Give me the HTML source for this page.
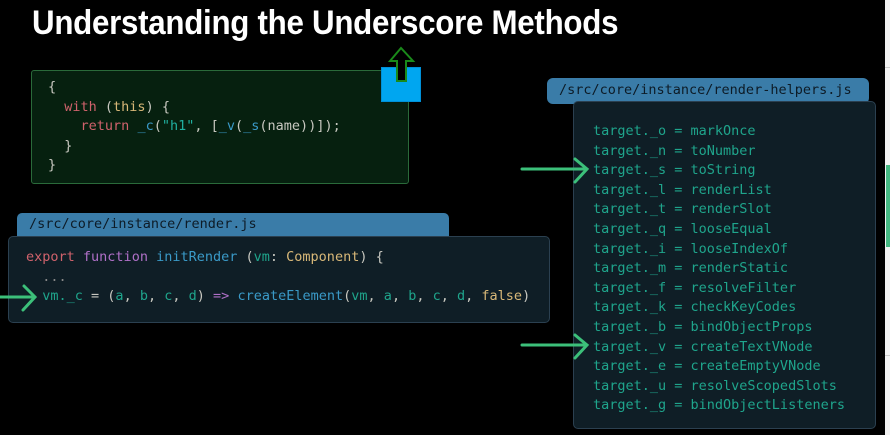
<!DOCTYPE html>
<html><head><meta charset="utf-8"><style>
*{margin:0;padding:0;box-sizing:border-box}
body{width:890px;height:435px;background:#000;position:relative;overflow:hidden;font-family:"DejaVu Sans Mono","Liberation Mono",monospace;font-size:13.5px}
.abs{position:absolute}
h1{position:absolute;left:32px;top:4px;font-family:"Liberation Sans",sans-serif;font-weight:bold;font-size:34px;color:#fff;letter-spacing:-0.3px;white-space:nowrap;transform:scaleX(0.92);transform-origin:0 0}
pre{font-family:inherit;font-size:13.5px;line-height:19.6px;white-space:pre}
.k{color:#d0626c}.p{color:#b070c8}.f{color:#3a9ac8}.t{color:#1fa58c}.y{color:#d8b878}.g{color:#aab}.s{color:#20b0a0}
</style></head><body>
<h1>Understanding the Underscore Methods</h1>

<div class="abs" style="left:31px;top:70px;width:378px;height:114px;background:#06200f;border:1.5px solid #2a6a3a;border-radius:3px"></div>
<pre class="abs g" style="left:48px;top:78px;color:#c8c8c0">{
  <span class="k">with</span> (<span class="y">this</span>) {
    <span class="k">return</span> <span class="f">_c</span>(<span class="s">"h1"</span>, [<span class="f">_v</span>(<span class="f">_s</span>(name))]);
  }
}</pre>

<div class="abs" style="left:381px;top:67px;width:40px;height:35px;background:#00a6f0;border:1px solid #0090d8"></div>
<svg class="abs" style="left:388px;top:45px" width="28" height="40" viewBox="0 0 28 40"><path d="M9 36 V16 H2 L13 3 L25 16 H18 V36 Z" fill="#000" stroke="#1a8a1a" stroke-width="2"/></svg>

<div class="abs" style="left:17px;top:213px;width:432px;height:26px;background:#3a7ca8;border-radius:5px 5px 0 0"></div>
<div class="abs" style="left:29px;top:216px;color:#0d1b26;font-size:13.5px">/src/core/instance/render.js</div>
<div class="abs" style="left:8px;top:236px;width:542px;height:87px;background:#0f1e26;border:1.5px solid #2b4050;border-radius:5px"></div>
<pre class="abs" style="left:26px;top:248px;color:#c8c8c0"><span class="k">export</span> <span class="p">function</span> <span class="f">initRender</span> (<span class="t">vm</span>: <span class="y">Component</span>) {
  <span style="color:#888">...</span>
  <span class="t">vm._c</span> = (<span class="t">a</span>, <span class="t">b</span>, <span class="t">c</span>, <span class="t">d</span>) <span class="p">=&gt;</span> <span class="f">createElement</span>(<span class="t">vm</span>, <span class="t">a</span>, <span class="t">b</span>, <span class="t">c</span>, <span class="t">d</span>, <span class="y">false</span>)</pre>

<div class="abs" style="left:547px;top:78px;width:322px;height:26px;background:#3a7ca8;border-radius:6px"></div>
<div class="abs" style="left:559px;top:82px;color:#0d1b26">/src/core/instance/render-helpers.js</div>
<div class="abs" style="left:573px;top:101px;width:303px;height:328px;background:#0f1e26;border:1.5px solid #2b4050;border-radius:5px"></div>
<pre class="abs t" style="left:593px;top:122px">target._o = markOnce
target._n = toNumber
target._s = toString
target._l = renderList
target._t = renderSlot
target._q = looseEqual
target._i = looseIndexOf
target._m = renderStatic
target._f = resolveFilter
target._k = checkKeyCodes
target._b = bindObjectProps
target._v = createTextVNode
target._e = createEmptyVNode
target._u = resolveScopedSlots
target._g = bindObjectListeners</pre>

<svg class="abs" style="left:0;top:0" width="890" height="435">
<g stroke="#3cc07a" stroke-width="3" fill="none" stroke-linecap="round">
<path d="M0 297 H34"/><path d="M24 286 L35 297 L23 310"/>
<path d="M522 169 H585"/><path d="M575 159 L587 169 L575 182"/>
<path d="M522 345 H585"/><path d="M575 335 L587 345 L575 358"/>
</g>
<rect x="885" y="0" width="5" height="435" fill="#f2f2f2"/>
<rect x="885" y="67" width="5" height="1" fill="#ccc"/>
<rect x="885" y="355" width="5" height="1" fill="#ccc"/>
<rect x="886" y="165" width="4" height="82" fill="#45b882"/>
</svg>
</body></html>
